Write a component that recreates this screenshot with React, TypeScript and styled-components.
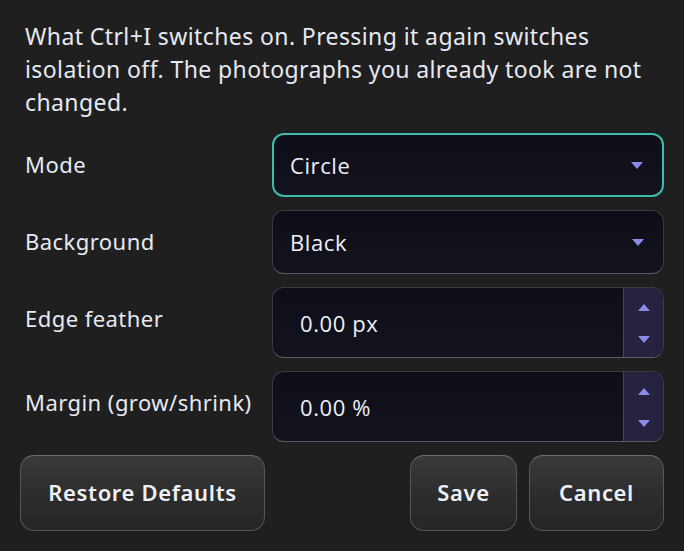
import React from "react";
import styled, { createGlobalStyle } from "styled-components";

const Global = createGlobalStyle`
  html, body { margin: 0; padding: 0; background: #1f1f1f; }
  body { width: 684px; height: 551px; overflow: hidden; }
`;

const Dialog = styled.div`
  box-sizing: border-box;
  width: 684px;
  height: 551px;
  background: #1f1f1f;
  padding: 20px 20px 0 20px;
  font-family: "Noto Sans", "Open Sans", sans-serif;
  color: #e6e9f2;
  display: flex;
  flex-direction: column;
`;

const Description = styled.p`
  margin: 0 0 0 5px;
  font-size: 23px;
  line-height: 33px;
  letter-spacing: 0.4px;
`;

const Form = styled.div`
  margin-top: 14px;
  display: grid;
  grid-template-columns: 252px 1fr;
  row-gap: 13px;
`;

const Label = styled.div`
  height: 64px;
  display: flex;
  align-items: center;
  padding-left: 5px;
  padding-bottom: 3px;
  box-sizing: border-box;
  font-size: 22px;
  letter-spacing: 0.45px;
  align-self: start;
  white-space: nowrap;
`;

const Field = styled.div<{ $focused?: boolean; $tall?: boolean }>`
  box-sizing: border-box;
  height: ${(p) => (p.$tall ? "71px" : "64px")};
  border-radius: 12px;
  background: linear-gradient(180deg, #0e0e18 0%, #13131e 100%);
  border: ${(p) => (p.$focused ? "2px solid #3dbcab" : "1px solid #3b3b46")};
  border-bottom-color: ${(p) => (p.$focused ? "#3dbcab" : "#5b5b66")};
  display: flex;
  align-items: stretch;
  overflow: hidden;
`;

const Value = styled.div<{ $inset: number }>`
  flex: 1;
  display: flex;
  align-items: center;
  padding-left: ${(p) => p.$inset}px;
  font-family: "Open Sans", "Noto Sans", sans-serif;
  font-size: 22px;
  letter-spacing: 0.6px;
  color: #eef0f8;
`;

const DropArrow = styled.div`
  width: 46px;
  display: flex;
  align-items: center;
  justify-content: center;
  padding-right: 2px;
  padding-top: 1px;
`;

const Spin = styled.div`
  width: 40px;
  background: #24223c;
  border-left: 1px solid #47465a;
  display: flex;
  flex-direction: column;
  align-items: center;
  justify-content: space-between;
  padding: 16px 0 14px;
  box-sizing: border-box;
`;

const Tri = ({ up }: { up?: boolean }) => (
  <svg width="12" height="7" viewBox="0 0 12 7">
    <path d={up ? "M0 7 L6 0 L12 7 Z" : "M0 0 L12 0 L6 7 Z"} fill="#8b8ce8" />
  </svg>
);

const Buttons = styled.div`
  margin-top: 13px;
  display: flex;
  gap: 12px;
`;

const Button = styled.button<{ $w: number }>`
  box-sizing: border-box;
  width: ${(p) => p.$w}px;
  height: 76px;
  border-radius: 14px;
  border: 1px solid #55555c;
  border-top-color: #6a6a72;
  background: linear-gradient(180deg, #3a3a3a 0%, #2c2c2c 55%, #262626 100%);
  color: #eef0f8;
  font-family: "Noto Sans", "Open Sans", sans-serif;
  font-weight: 600;
  font-size: 22px;
  letter-spacing: 0.65px;
  padding: 0;
  padding-bottom: 2px;
`;

const Spacer = styled.div`
  flex: 1;
`;

export default function App() {
  return (
    <Dialog>
      <Global />
      <Description>
        What Ctrl+I switches on. Pressing it again switches isolation off. The photographs you already took are not changed.
      </Description>
      <Form>
        <Label>Mode</Label>
        <Field $focused>
          <Value $inset={16}>Circle</Value>
          <DropArrow><Tri /></DropArrow>
        </Field>
        <Label>Background</Label>
        <Field>
          <Value $inset={17}>Black</Value>
          <DropArrow><Tri /></DropArrow>
        </Field>
        <Label>Edge feather</Label>
        <Field $tall>
          <Value $inset={27}>0.00 px</Value>
          <Spin><Tri up /><Tri /></Spin>
        </Field>
        <Label>Margin (grow/shrink)</Label>
        <Field $tall>
          <Value $inset={27}>0.00 %</Value>
          <Spin><Tri up /><Tri /></Spin>
        </Field>
      </Form>
      <Buttons>
        <Button $w={245}>Restore Defaults</Button>
        <Spacer />
        <Button $w={107}>Save</Button>
        <Button $w={135}>Cancel</Button>
      </Buttons>
    </Dialog>
  );
}
